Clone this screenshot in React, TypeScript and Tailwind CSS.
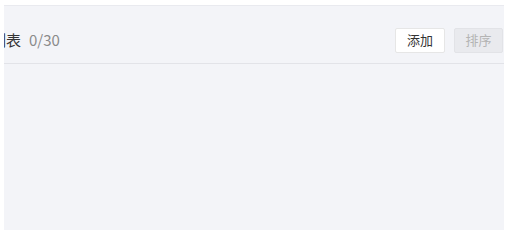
export default function App() {
  return (
    <div className="w-[509px] h-[230px] bg-white pt-[5px] pl-[4px]">
      <div className="w-[500px] h-[225px] bg-[#f3f4f8] border-t border-[#e9eaef] overflow-hidden flex flex-col font-['Microsoft_YaHei','Noto_Sans_CJK_SC',sans-serif]">
        {/* Header */}
        <div className="h-[58px] pt-[11px] flex items-center justify-between border-b border-[#e2e3e8] pr-[1px]">
          <div className="flex items-center gap-[8px] ml-[-13px] text-[15px]">
            <span className="text-[#333]">列表</span>
            <span className="text-[#8a8a8a]">0/30</span>
          </div>
          <div className="flex items-center gap-[9px]">
            <button className="w-[50px] h-[25px] bg-white border border-[#e6e6e6] rounded-[2px] text-[13px] text-[#333]">
              添加
            </button>
            <button
              disabled
              className="w-[49px] h-[25px] bg-[#e9eaee] border border-[#e2e3e7] rounded-[2px] text-[13px] text-[#b4b4b4]"
            >
              排序
            </button>
          </div>
        </div>
        <div className="flex-1" />
      </div>
    </div>
  );
}
